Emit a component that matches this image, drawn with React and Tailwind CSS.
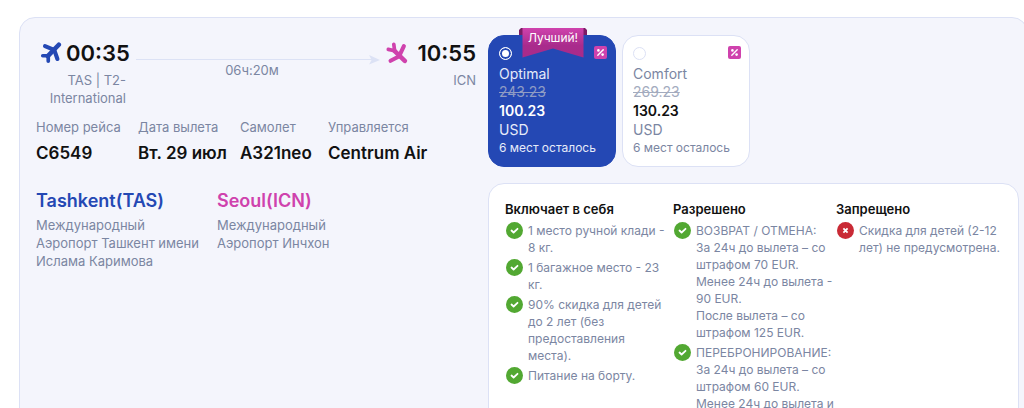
const flightInfo = [
  { label: "Номер рейса", value: "C6549" },
  { label: "Дата вылета", value: "Вт. 29 июл" },
  { label: "Самолет", value: "A321neo" },
  { label: "Управляется", value: "Centrum Air" },
];

const tariffs = [
  { id: "optimal", name: "Optimal", oldPrice: "243.23", price: "100.23", best: true },
  { id: "comfort", name: "Comfort", oldPrice: "269.23", price: "130.23" },
];

const rules = [
  {
    title: "Включает в себя",
    allowed: true,
    items: [
      ["1 место ручной клади - 8 кг."],
      ["1 багажное место - 23 кг."],
      ["90% скидка для детей до 2 лет (без предоставления места)."],
      ["Питание на борту."],
    ],
  },
  {
    title: "Разрешено",
    allowed: true,
    items: [
      [
        "ВОЗВРАТ / ОТМЕНА:",
        "За 24ч до вылета – со штрафом 70 EUR.",
        "Менее 24ч до вылета - 90 EUR.",
        "После вылета – со штрафом 125 EUR.",
      ],
      [
        "ПЕРЕБРОНИРОВАНИЕ:",
        "За 24ч до вылета – со штрафом 60 EUR.",
        "Менее 24ч до вылета и",
      ],
    ],
  },
  {
    title: "Запрещено",
    allowed: false,
    items: [["Скидка для детей (2-12 лет) не предусмотрена."]],
  },
];

const Plane = ({ className }) => (
  <svg viewBox="0 0 24 24" className={className} fill="none" stroke="currentColor" strokeLinecap="round" strokeLinejoin="round" aria-hidden="true">
    <path d="M20.500 3L8.500 15.500" strokeWidth="5" />
    <path d="M14 8L5.500 4.500M16 10L19 18.500" strokeWidth="4.500" />
    <path d="M9 15L3 15M9 15L9 21" strokeWidth="4" />
  </svg>
);

const LandingPlane = ({ className }) => (
  <svg viewBox="0 0 24 24" className={className} fill="none" stroke="currentColor" strokeLinecap="round" strokeLinejoin="round" aria-hidden="true">
    <path d="M9 9.500L20.500 20.500" strokeWidth="5" />
    <path d="M15 14L19.500 4.500M14.500 15.500L5 20.500" strokeWidth="4.500" />
    <path d="M9.500 10L8.500 2.500M9.500 9.500L2.500 8" strokeWidth="4" />
  </svg>
);

const PercentIcon = () => (
  <svg viewBox="0 0 13 13" className="h-[13px] w-[13px]" fill="none" aria-hidden="true">
    <rect width="13" height="13" rx="2" fill="#cf42ad" />
    <path d="M9.200 3.800L3.800 9.200" stroke="#fff" strokeWidth="1.400" strokeLinecap="round" />
    <circle cx="4.400" cy="4.400" r="1.300" fill="#fff" />
    <circle cx="8.600" cy="8.600" r="1.300" fill="#fff" />
  </svg>
);

const RuleIcon = ({ allowed }) => (
  <svg viewBox="0 0 17 17" className="ml-px h-[17px] w-[17px] shrink-0" fill="none" stroke="#fff" strokeWidth="1.800" aria-hidden="true">
    <circle cx="8.500" cy="8.500" r="8.500" fill={allowed ? "#52a832" : "#c92a35"} stroke="none" />
    {allowed ? (
      <path d="M5.500 8.500L7.600 10.500L11.500 6.800" strokeLinecap="round" strokeLinejoin="round" />
    ) : (
      <path d="M6.400 6.400L10.600 10.600M10.600 6.400L6.400 10.600" />
    )}
  </svg>
);

const Ribbon = () => (
  <div className="absolute -top-2 left-[30px] h-[30px] w-[68px] text-center text-xs leading-5 text-white">
    <svg viewBox="0 0 68 30" className="absolute inset-0 h-full w-full" aria-hidden="true">
      <defs>
        <linearGradient id="ribbon" x1="0" y1="0" x2="0" y2="1">
          <stop offset="0" stopColor="#cf42ad" />
          <stop offset="0.6" stopColor="#a92b8c" />
          <stop offset="1" stopColor="#a82b8a" />
        </linearGradient>
      </defs>
      <path d="M2 0H66L68 2V7H0V2Z" fill="#7c1b65" />
      <path d="M3.500 0H64.500V29.500L34 20.500L3.500 29.500Z" fill="url(#ribbon)" />
    </svg>
    <span className="relative">Лучший!</span>
  </div>
);

const TariffCard = ({ tariff }) => (
  <label
    className={`relative flex w-32 flex-col rounded-2xl border px-2.5 pt-2.5 pb-[9px] ${
      tariff.best
        ? "border-[#2448b4] bg-[#2448b4] text-[#e6ebf9]"
        : "border-[#dce1f5] bg-white text-[#7b86a2]"
    }`}
  >
    {tariff.best && <Ribbon />}
    <span className="flex h-[18px] items-start justify-between">
      <input
        type="radio"
        name="tariff"
        defaultChecked={tariff.best}
        className="mt-px h-[13px] w-[13px] appearance-none rounded-full border border-[#dce1f5] checked:border-white checked:bg-white checked:shadow-[inset_0_0_0_2px_#2448b4]"
      />
      <span className="-mr-0.5">
        <PercentIcon />
      </span>
    </span>
    <span className="text-sm leading-[19px]">{tariff.name}</span>
    <s className={`text-sm leading-[18px] ${tariff.best ? "text-[#8f9cc4]" : "text-[#a3abbe]"}`}>
      {tariff.oldPrice}
    </s>
    <b className={`text-sm leading-5 font-semibold ${tariff.best ? "text-white" : "text-[#111111]"}`}>
      {tariff.price}
    </b>
    <span className="text-sm leading-[18px]">USD</span>
    <span className="text-xs leading-[18px] whitespace-nowrap">6 мест осталось</span>
  </label>
);

const RuleColumn = ({ title, items, allowed }) => (
  <section className="first:pr-1">
    <h3 className="text-[13px] leading-[18px] font-semibold text-[#111111]">{title}</h3>
    <ul className="mt-1 flex flex-col gap-[3px]">
      {items.map((lines) => (
        <li key={lines[0]} className="flex gap-[5px] text-xs leading-[17px]">
          <RuleIcon allowed={allowed} />
          <div>
            {lines.map((line) => (
              <p key={line}>{line}</p>
            ))}
          </div>
        </li>
      ))}
    </ul>
  </section>
);

const App = () => {
  return (
    <main className="h-screen overflow-hidden bg-white pt-[17px] pl-[19px] font-[Inter,sans-serif] text-[#7b86a2]">
      <div className="-mr-1 flex min-h-screen gap-3 rounded-2xl border border-[#dce1f5] bg-[#f4f5fc] pt-[17px] pr-2 pl-4">
        {/* Flight */}
        <div className="w-[440px] shrink-0">
          <div className="flex h-[72px] items-start">
            <div className="w-[94px]">
              <div className="flex h-9 items-center gap-1 pl-1">
                <Plane className="h-[22px] w-[22px] shrink-0 text-[#2448b4]" />
                <time className="text-[22px] font-semibold text-[#111111]">00:35</time>
              </div>
              <p className="pr-1 text-right text-[13px] leading-[18px]">TAS | T2-International</p>
            </div>
            <div className="flex-1 pt-5 pl-1.5">
              <svg viewBox="0 0 246 10" className="h-2.5 w-full text-[#dce2f5]" fill="currentColor" aria-hidden="true">
                <path d="M0 4H238V5H0ZM235 0L246 5L235 9.500L237.500 5Z" />
              </svg>
              <p className="-mt-1 pr-3 text-center text-[13px] leading-[18px]">06ч:20м</p>
            </div>
            <div className="w-24">
              <div className="flex h-9 items-center justify-between pl-1.5">
                <LandingPlane className="h-[22px] w-[22px] text-[#cf42ad]" />
                <time className="text-[22px] font-semibold text-[#111111]">10:55</time>
              </div>
              <p className="text-right text-[13px] leading-[18px]">ICN</p>
            </div>
          </div>

          <dl className="mt-2.5 grid grid-cols-[102px_102px_88px_auto]">
            {flightInfo.map((info) => (
              <div key={info.label}>
                <dt className="text-[13px] leading-5">{info.label}</dt>
                <dd className="mt-1 text-[17px] leading-6 font-semibold whitespace-nowrap text-[#111111]">{info.value}</dd>
              </div>
            ))}
          </dl>

          <div className="mt-6 flex gap-2.5">
            <div className="w-[171px]">
              <h2 className="text-lg leading-6 font-semibold text-[#2448b4]">Tashkent(TAS)</h2>
              <p className="mt-[3px] text-[13px] leading-[18px]">Международный Аэропорт Ташкент имени Ислама Каримова</p>
            </div>
            <div className="w-[150px]">
              <h2 className="text-lg leading-6 font-semibold text-[#cf42ad]">Seoul(ICN)</h2>
              <p className="mt-[3px] text-[13px] leading-[18px]">Международный Аэропорт Инчхон</p>
            </div>
          </div>
        </div>

        {/* Tariffs */}
        <div className="flex min-w-0 flex-1 flex-col gap-4">
          <div className="flex gap-1.5">
            {tariffs.map((tariff) => (
              <TariffCard key={tariff.id} tariff={tariff} />
            ))}
          </div>
          <div className="grid flex-1 grid-cols-[168fr_163fr_166fr] rounded-2xl border border-[#dce1f5] bg-white px-4 pt-4">
            {rules.map((rule) => (
              <RuleColumn key={rule.title} {...rule} />
            ))}
          </div>
        </div>
      </div>
    </main>
  );
};

export default App;
